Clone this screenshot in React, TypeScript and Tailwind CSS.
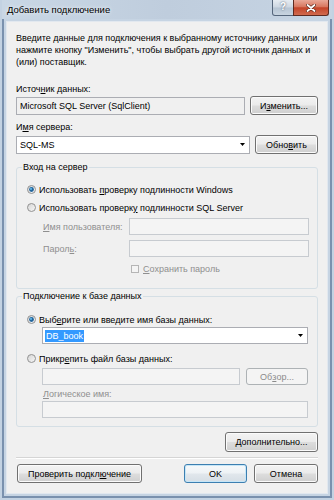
import React from 'react';

const BTN =
  'border-[#707070] bg-[linear-gradient(180deg,#f3f3f3_0%,#ebebeb_48%,#dddddd_52%,#cfcfcf_100%)] shadow-[inset_0_0_0_1px_#fbfbfb]';
const BTN_DEF =
  'border-[#3c7fb1] bg-[linear-gradient(180deg,#f6f9fb_0%,#eef2f5_48%,#e1e7ec_52%,#d6dee5_100%)] shadow-[inset_0_0_0_1px_#c6e6f7]';
const BTN_OFF = 'border-[#adb2b5] bg-[#f4f4f4] text-[#8b8b8b]';

function Btn({
  children,
  className = '',
  def = false,
  disabled = false,
}: {
  children: React.ReactNode;
  className?: string;
  def?: boolean;
  disabled?: boolean;
}) {
  const tone = disabled ? BTN_OFF : def ? BTN_DEF : BTN;
  return (
    <div className={`flex shrink-0 items-center justify-center whitespace-nowrap rounded-[3px] border ${tone} ${className}`}>
      {children}
    </div>
  );
}

function Arrow() {
  return (
    <svg width="5" height="3" viewBox="0 0 5 3" className="shrink-0">
      <path d="M0 0H5L2.5 3Z" fill="#000" />
    </svg>
  );
}

function Radio({ checked = false }: { checked?: boolean }) {
  return (
    <svg width="9" height="9" viewBox="0 0 9 9" className="shrink-0">
      <defs>
        <linearGradient id={checked ? 'rg1' : 'rg0'} x1="0" y1="0" x2="1" y2="1">
          <stop offset="0" stopColor="#d4d4d4" />
          <stop offset="1" stopColor="#f8f8f8" />
        </linearGradient>
      </defs>
      <circle cx="4.5" cy="4.5" r="4" fill={`url(#${checked ? 'rg1' : 'rg0'})`} stroke="#929292" strokeWidth="1" />
      {checked && (
        <>
          <circle cx="4.5" cy="4.5" r="2.4" fill="#20649c" />
          <circle cx="4" cy="3.9" r="1.1" fill="#5fb4e6" />
        </>
      )}
    </svg>
  );
}

function U({ children }: { children: React.ReactNode }) {
  return <span className="underline underline-offset-[1px]">{children}</span>;
}

function TitleButtons() {
  return (
    <div className="mr-[3px] flex">
      <div className="flex h-[16px] w-[22px] items-center justify-center rounded-bl-[3px] border border-t-0 border-[#55667b] bg-[linear-gradient(180deg,#e6ecf2_0%,#cdd7e2_48%,#b6c4d3_52%,#c8d4e0_100%)] pb-[1px] text-[10px] font-bold text-white [text-shadow:0_0_2px_#3b4a5c]">
        ?
      </div>
      <div className="-ml-px flex h-[16px] w-[36px] items-center justify-center rounded-br-[3px] border border-t-0 border-[#5e2a20] bg-[linear-gradient(180deg,#e9a898_0%,#d8775f_45%,#c44429_52%,#d06a4e_100%)]">
        <svg width="10" height="8" viewBox="0 0 10 8">
          <path d="M1.5 1L8.5 7M8.5 1L1.5 7" stroke="#5a2418" strokeWidth="3.2" strokeLinecap="round" />
          <path d="M1.5 1L8.5 7M8.5 1L1.5 7" stroke="#ffffff" strokeWidth="1.8" strokeLinecap="round" />
        </svg>
      </div>
    </div>
  );
}

export default function App() {
  return (
    <div className="flex h-[500px] w-[334px] flex-col overflow-hidden whitespace-nowrap bg-[#c3d2e2] px-[2px] pb-[2px] font-['Liberation_Sans',Arial,sans-serif] text-[9px] leading-[12px] text-black">
      {/* title bar */}
      <div className="flex h-[19px] shrink-0 items-start justify-between bg-[linear-gradient(90deg,#c9d7e5_0%,#bfcddd_50%,#c6d4e3_100%)]">
        <div className="ml-[5px] mt-[4px] text-[9.5px] [text-shadow:0_0_4px_#ffffff]">Добавить подключение</div>
        <TitleButtons />
      </div>

      {/* frame */}
      <div className="flex flex-1 flex-col border-x-2 border-b-2 border-[#7a91ae] bg-[#c6d4e3] px-[2px] pb-[2px] pt-[2px]">
        <div className="flex flex-1 flex-col border border-[#e2e8ef] bg-[#f0f0f0] px-[9px] pt-[10px]">
          <div>
            Введите данные для подключения к выбранному источнику данных или
            <br />
            нажмите кнопку "Изменить", чтобы выбрать другой источник данных и
            <br />
            (или) поставщик.
          </div>

          <div className="mt-[15px]">
            Источ<U>н</U>ик данных:
          </div>
          <div className="mt-[1px] flex h-[19px] items-center">
            <div className="flex h-[18px] w-[229px] items-center border border-[#abadb3] bg-[#f0f0f0] pl-[3px]">
              Microsoft SQL Server (SqlClient)
            </div>
            <Btn className="ml-auto h-[19px] w-[68px]">
              И<U>з</U>менить...
            </Btn>
          </div>

          <div className="mt-[6px]">
            И<U>м</U>я сервера:
          </div>
          <div className="mt-[2px] flex h-[19px] items-center">
            <div className="flex h-[18px] w-[234px] items-center justify-between border border-[#abadb3] bg-white pl-[3px] pr-[4px]">
              <span>SQL-MS</span>
              <Arrow />
            </div>
            <Btn className="ml-auto h-[19px] w-[63px]">
              Обно<U>в</U>ить
            </Btn>
          </div>

          {/* login group */}
          <fieldset className="mt-[7px] rounded-[3px] border border-[#d5dfe5]">
            <legend className="ml-[5px] px-[1px]">Вход на сервер</legend>
            <div className="flex flex-col pb-[13px] pl-[10px] pr-[8px]">
              <div className="mt-[10px] flex h-[13px] items-center gap-[3px]">
                <Radio checked />
                <span>
                  Использовать <U>п</U>роверку подлинности Windows
                </span>
              </div>
              <div className="mt-[5px] flex h-[13px] items-center gap-[3px]">
                <Radio />
                <span>
                  Использовать проверк<U>у</U> подлинности SQL Server
                </span>
              </div>
              <div className="mt-[4px] flex h-[17px] items-center pl-[16px] text-[#8f8f8f]">
                <span className="flex-1">
                  <U>И</U>мя пользователя:
                </span>
                <div className="h-[17px] w-[180px] border border-[#c7cbd0] bg-[#f4f4f4]" />
              </div>
              <div className="mt-[5px] flex h-[17px] items-center pl-[16px] text-[#8f8f8f]">
                <span className="flex-1">
                  Парол<U>ь</U>:
                </span>
                <div className="h-[17px] w-[180px] border border-[#c7cbd0] bg-[#f4f4f4]" />
              </div>
              <div className="mt-[5px] flex h-[13px] items-center gap-[4px] pl-[104px] text-[#8f8f8f]">
                <div className="h-[8px] w-[8px] border border-[#b5b5b5] bg-[#f4f4f4]" />
                <span>
                  <U>С</U>охранить пароль
                </span>
              </div>
            </div>
          </fieldset>

          {/* database group */}
          <fieldset className="mt-[1px] rounded-[3px] border border-[#d5dfe5]">
            <legend className="ml-[5px] px-[1px]">Подключение к базе данных</legend>
            <div className="flex flex-col pb-[8px] pl-[10px] pr-[9px]">
              <div className="mt-[11px] flex h-[13px] items-center gap-[3px]">
                <Radio checked />
                <span>
                  Выб<U>е</U>рите или введите имя базы данных:
                </span>
              </div>
              <div className="ml-[15px] mt-[1px] flex h-[17px] items-center justify-between border border-[#abadb3] bg-white pl-[2px] pr-[4px]">
                <span className="bg-[#3399ff] px-[1px] leading-[12px] text-white">DB_book</span>
                <Arrow />
              </div>
              <div className="mt-[8px] flex h-[13px] items-center gap-[3px]">
                <Radio />
                <span>
                  Прикр<U>е</U>пить файл базы данных:
                </span>
              </div>
              <div className="ml-[15px] mt-[3px] flex h-[17px] items-center gap-[6px]">
                <div className="h-[17px] flex-1 border border-[#c7cbd0] bg-[#f4f4f4]" />
                <Btn disabled className="h-[17px] w-[62px]">
                  Об<U>з</U>ор...
                </Btn>
              </div>
              <div className="ml-[16px] mt-[3px] text-[#8f8f8f]">
                <U>Л</U>огическое имя:
              </div>
              <div className="ml-[15px] mt-[1px] h-[17px] border border-[#c7cbd0] bg-[#f4f4f4]" />
            </div>
          </fieldset>

          <Btn className="mt-[5px] h-[20px] w-[93px] self-end">
            <U>Д</U>ополнительно...
          </Btn>

          <div className="mt-[5px] h-[2px] border-t border-b border-t-[#d5d5d5] border-b-white" />

          <div className="mt-[5px] flex h-[19px] items-center">
            <Btn className="ml-[1px] h-[19px] w-[125px]">
              Проверить подкл<U>ю</U>чение
            </Btn>
            <Btn def className="ml-auto h-[19px] w-[63px]">
              OK
            </Btn>
            <Btn className="ml-[7px] h-[19px] w-[64px]">
              Отмена
            </Btn>
          </div>
        </div>
      </div>
    </div>
  );
}
